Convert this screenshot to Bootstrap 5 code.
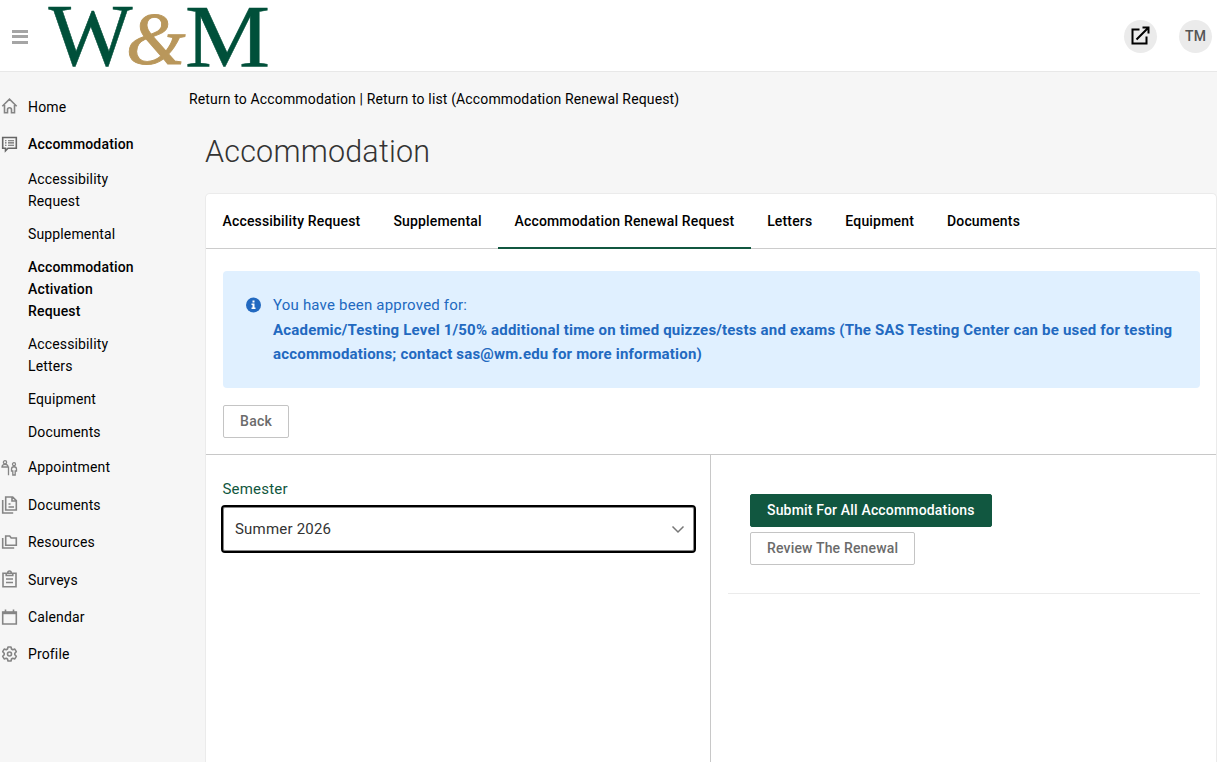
<!DOCTYPE html>
<html lang="en">
<head>
<meta charset="utf-8">
<meta name="viewport" content="width=device-width, initial-scale=1">
<title>Accommodation</title>
<link href="https://cdn.jsdelivr.net/npm/bootstrap@5.3.0/dist/css/bootstrap.min.css" rel="stylesheet">
<style>
html,body{height:100%}
body{font-family:Roboto,"Liberation Sans",sans-serif;font-size:14px;letter-spacing:.14px;color:#000;background:#f6f6f6;overflow:hidden}
a{color:inherit;text-decoration:none}
.topbar{height:72px;border-bottom:1px solid #e8e8e8;padding:1px 5px 0 12px}
.burger{width:16px;height:14px;margin-top:1px}
.burger i{height:3px;background:#a5a5a5}
.logo{margin-left:20px;overflow:visible}
.circle{width:33px;height:33px;border-radius:50%;background:#ebebeb;color:#555;font-size:14px;font-weight:500}
.side{width:189px;padding-top:16.6px}
.side .item{height:37.4px;gap:10px;padding-left:1px}
.side svg{width:17px;height:18px;fill:none;stroke:#858585;stroke-width:1.6;flex:none;margin-bottom:1.6px}
.side svg.low{margin-bottom:0}
.subnav{padding-left:28px;width:150px;margin:-1px 0 .8px}
.subnav a{display:block;line-height:22px;padding:5.5px 0}
.strong{font-weight:500;letter-spacing:.17px}
.crumbs{height:54px;padding-top:16px;line-height:22px}
.title{font-size:30.5px;font-weight:300;line-height:40px;color:#333;margin:6px 0 21px 16px;letter-spacing:.2px}
.panel{margin-left:16px;border:1px solid #ebebeb;border-bottom:0;border-radius:5px 5px 0 0;background:#fff}
.tabs{height:55px;border-bottom:1px solid #ccc}
.tabs a{padding:2px 16.5px 0;font-weight:500;letter-spacing:.17px;height:55px;border-bottom:2px solid transparent}
.tabs a.active{border-color:#115740;padding:2px 16.200px 0}
.notice{margin:22px 16px 0 17px;height:117px;background:#e0f0ff;border-radius:4px;color:#2269c0;font-size:15px;letter-spacing:.2px;line-height:24.5px;padding:22px 23px}
.notice b{letter-spacing:.19px}
.btn-line,.btn-main{height:33px;border-radius:2px;font-size:14px;font-weight:500;padding:0 16px;letter-spacing:.17px;line-height:31px}
.btn-line{border:1px solid #c4c4c4;color:#6b6b6b;background:#fff}
.btn-back{letter-spacing:.3px}
.btn-main{background:#115740;border:1px solid #115740;color:#fff}
.split{border-top:1px solid #c8c8c8}
.left{width:505px;border-right:1px solid #c8c8c8;padding:22px 14px 0 15px;letter-spacing:.2px}
.left label{font-size:15px;color:#115740;line-height:24px;margin-left:1.5px}
.pick{height:48px;margin-top:4px;border:2px solid #000;border-radius:4px;box-shadow:inset 0 0 0 1px #888;padding:0 9px 0 12px;font-size:15px;color:#333}
.right{padding:39px 16px 0 17px}
.rule{height:1px;background:#ebebeb;margin-top:28px}
</style>
</head>
<body class="d-flex flex-column">
<header class="topbar bg-white d-flex align-items-center flex-shrink-0">
  <div class="burger d-flex flex-column justify-content-between"><i></i><i></i><i></i></div>
  <svg class="logo" width="222" height="70" viewBox="48 1 222 70" font-family="'Liberation Serif',serif" letter-spacing="0">
    <text x="48.500" y="65" font-size="88" textLength="84" lengthAdjust="spacingAndGlyphs" fill="#00503a" stroke="#00503a" stroke-width=".5">W</text>
    <text x="126" y="63.500" font-size="73" font-style="italic" textLength="59.500" lengthAdjust="spacingAndGlyphs" fill="#b9975b" stroke="#b9975b" stroke-width=".9">&amp;</text>
    <text x="185" y="66" font-size="89" textLength="85" lengthAdjust="spacingAndGlyphs" fill="#00503a" stroke="#00503a" stroke-width=".5">M</text>
  </svg>
  <div class="circle ms-auto d-flex align-items-center justify-content-center">
    <svg width="20" height="20" viewBox="0.500 0.500 20 20" fill="none" stroke="#000" stroke-width="2"><path d="M9 4H2v14h14v-7M6 14 18 2M12 2h6v6"/></svg>
  </div>
  <div class="circle d-flex align-items-center justify-content-center" style="margin-left:22px">TM</div>
</header>
<div class="d-flex flex-grow-1">
  <nav class="side flex-shrink-0">
    <a class="item d-flex align-items-center" href="#"><svg viewBox="0 0 17 18"><path d="m1.300 9.200 7.200-7 7.200 7M3.500 8v7.700h3v-3a2 2 0 0 1 4 0v3h3V8"/></svg>Home</a>
    <a class="item strong d-flex align-items-center" href="#"><svg viewBox="0 0 17 18" style="stroke:#666"><path d="M1.700 2.500h13.600v10.800H7L4.500 15.800v-2.500H1.700z"/><path stroke-width="1.100" d="M4 5.700h1.500M7 5.700h6M4 7.900h1.500M7 7.900h6M4 10.200h1.500M7 10.200h6"/></svg>Accommodation</a>
    <div class="subnav">
      <a href="#">Accessibility<br>Request</a>
      <a href="#">Supplemental</a>
      <a class="strong" href="#">Accommodation<br>Activation<br>Request</a>
      <a href="#">Accessibility<br>Letters</a>
      <a href="#">Equipment</a>
      <a href="#">Documents</a>
    </div>
    <a class="item d-flex align-items-center" href="#"><svg class="low" viewBox="0 0 17 18"><g stroke-width="1.300"><circle cx="4" cy="3.300" r="1.600"/><path d="M1 8c0-3.400 6-3.400 6 0zM1 8.200h6.500v8"/><circle cx="13" cy="5.200" r="1.500"/><path d="M11.800 16v-4H10.500V10c0-3 5-3 5 0v2h-1.300v4z"/></g></svg>Appointment</a>
    <a class="item d-flex align-items-center" href="#"><svg class="low" viewBox="0 0 17 18"><path d="M4.700 1h7l3.600 3.600v9.400H4.700zM11 1v4h4.300M1.700 4v13h10.500M7.500 8h2M7.500 11h5.500"/></svg>Documents</a>
    <a class="item d-flex align-items-center" href="#"><svg viewBox="0 0 17 18"><path d="M4.700 3h4l1.500 2h5.100v7.300H4.700zM1.700 5v10h11.500"/></svg>Resources</a>
    <a class="item d-flex align-items-center" href="#"><svg viewBox="0 0 17 18"><path d="M2 3.200h13v13.500H2zM5.200 5.500V3.200h1.500c0-3 3.600-3 3.600 0h1.500v2.300zM5 9h7M5 12.500h7"/></svg>Surveys</a>
    <a class="item d-flex align-items-center" href="#"><svg viewBox="0 0 17 18"><path d="M1.700 4h13.600v12H1.700zM4.500 1.500v3M12.500 1.500v3"/><path d="M1.700 5h13.600" stroke-width="2.400"/></svg>Calendar</a>
    <a class="item d-flex align-items-center" href="#"><svg viewBox="0 0 17 18"><circle cx="8.500" cy="9" r="2"/><path stroke-linejoin="round" d="M7 2h3l.5 2 1.300.8 2-.7 1.500 2.600-1.500 1.500v1.600l1.500 1.500-1.500 2.600-2-.7-1.300.8L10 16H7l-.5-2-1.300-.8-2 .7-1.500-2.600 1.500-1.500V8.200L1.700 6.700l1.500-2.600 2 .7L6.500 4z"/></svg>Profile</a>
  </nav>
  <main class="flex-grow-1 d-flex flex-column">
    <div class="crumbs"><a href="#">Return to Accommodation</a> | <a href="#">Return to list (Accommodation Renewal Request)</a></div>
    <h1 class="title">Accommodation</h1>
    <section class="panel flex-grow-1 d-flex flex-column">
      <div class="tabs d-flex">
        <a class="d-flex align-items-center" href="#">Accessibility Request</a>
        <a class="d-flex align-items-center" href="#">Supplemental</a>
        <a class="d-flex align-items-center active" href="#">Accommodation Renewal Request</a>
        <a class="d-flex align-items-center" href="#">Letters</a>
        <a class="d-flex align-items-center" href="#">Equipment</a>
        <a class="d-flex align-items-center" href="#">Documents</a>
      </div>
      <div class="notice d-flex">
        <svg class="flex-shrink-0" width="15" height="24" viewBox="0 0 15 24"><circle cx="7.500" cy="12" r="7.500" fill="#2269c0"/><path d="M6.500 7.500h2v2h-2zM5.500 10.500h3v4h1v1.500h-4v-1.500h1V12h-1z" fill="#fff"/></svg>
        <div style="margin-left:12px">You have been approved for:<br><b>Academic/Testing Level 1/50% additional time on timed quizzes/tests and exams (The SAS Testing Center can be used for testing<br>accommodations; contact sas@wm.edu for more information)</b></div>
      </div>
      <div style="padding:17px 17px 16px"><button class="btn btn-line btn-back d-block">Back</button></div>
      <div class="split d-flex flex-grow-1">
        <div class="left flex-shrink-0">
          <label class="d-block">Semester</label>
          <div class="pick d-flex align-items-center justify-content-between" tabindex="0">Summer 2026
            <svg width="14" height="14" viewBox="0 0 14 14" fill="none" stroke="#777" stroke-width="1.500"><path d="m1.500 4.500 5.500 5.500 5.500-5.500"/></svg></div>
        </div>
        <div class="right flex-grow-1">
          <div class="d-flex flex-column align-items-start" style="gap:5px;padding-left:22px">
            <button class="btn btn-main">Submit For All Accommodations</button>
            <button class="btn btn-line">Review The Renewal</button>
          </div>
          <div class="rule"></div>
        </div>
      </div>
    </section>
  </main>
</div>
<script src="https://cdn.jsdelivr.net/npm/bootstrap@5.3.0/dist/js/bootstrap.bundle.min.js"></script>
</body>
</html>
